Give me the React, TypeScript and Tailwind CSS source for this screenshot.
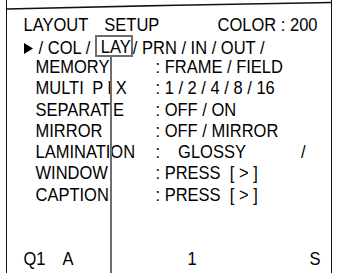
const LABELS: Record<string, React.ReactNode> = {
  'MULTI PIX': (
    <span className="flex">
      <span>MULTI</span>
      <span className="ml-[8.5px] tracking-[4px]">PIX</span>
    </span>
  ),
  SEPARATE: (
    <span className="flex">
      <span>SEPARAT</span>
      <span className="ml-[3px]">E</span>
    </span>
  ),
}

const ROWS: [string, React.ReactNode][] = [
  ['MEMORY', ': FRAME / FIELD'],
  ['MULTI PIX', ': 1 / 2 / 4 / 8 / 16'],
  ['SEPARATE', ': OFF / ON'],
  ['MIRROR', ': OFF / MIRROR'],
  [
    'LAMINATION',
    <span className="flex">
      <span>:</span>
      <span className="ml-[18px]">GLOSSY</span>
      <span className="ml-[55px]">/</span>
    </span>,
  ],
  ['WINDOW', ': PRESS  [ > ]'],
  ['CAPTION', ': PRESS  [ > ]'],
]

const TABS = ['PRN', 'IN', 'OUT']

export default function App() {
  return (
    <div
      className="relative w-[337px] h-[273px] overflow-hidden bg-white text-[16.5px] text-black"
      style={{ fontFamily: '"Liberation Sans", Arial, sans-serif' }}
    >
      {/* top edge of the monitor frame, a little bent */}
      <svg className="absolute left-0 top-0" width="337" height="14">
        <path d="M6.5 9 Q170 5 332 2.5" fill="none" stroke="#111" strokeWidth="1.6" />
      </svg>

      <div className="ml-[6px] w-[326px] h-full border-x-[1.5px] border-[#111] pl-[16.5px] pt-[15px] whitespace-pre">
        {/* title */}
        <div className="flex justify-between leading-[21px] pr-[13.5px] scale-y-[1.08]">
          <span>
            LAYOUT<span className="ml-[16px]">SETUP</span>
          </span>
          <span>COLOR : 200</span>
        </div>

        {/* tabs */}
        <div className="flex items-start h-[21px] leading-[21px] mt-[1.5px]">
          <svg width="9" height="11" viewBox="0 0 9 11" className="mt-[5px] mr-[1.5px] shrink-0">
            <path d="M0 0 L9 5.5 L0 11 Z" fill="#000" />
          </svg>
          <span className="scale-y-[1.08]"> / COL / </span>
          <span className="-mt-[2.5px] border-2 border-[#6e6e6e] pl-[4px] pt-[2.5px] leading-[15px]">
            <span className="inline-block scale-y-[1.08]">LAY</span>
          </span>
          <span className="scale-y-[1.08]">
            {TABS.map(t => `/ ${t} `).join('')}/
          </span>
        </div>

        {/* settings */}
        <div className="pl-[12px] -mt-[1.5px]">
          {ROWS.map(([label, value]) => (
            <div key={label} className="grid grid-cols-[120px_1fr] leading-[21.3px] scale-y-[1.08]">
              <span>{LABELS[label] ?? label}</span>
              <span>{value}</span>
            </div>
          ))}
        </div>

        {/* status line */}
        <div className="flex leading-[21px] mt-[42.5px] pr-[10.5px] scale-y-[1.08]">
          <span>Q1</span>
          <span className="ml-[17px]">A</span>
          <span className="ml-[114px]">1</span>
          <span className="ml-auto">S</span>
        </div>
      </div>

      {/* pointer from the selected tab */}
      <div className="absolute left-[110px] top-[56px] bottom-0 w-[2px] bg-[#6e6e6e]" />
    </div>
  )
}
